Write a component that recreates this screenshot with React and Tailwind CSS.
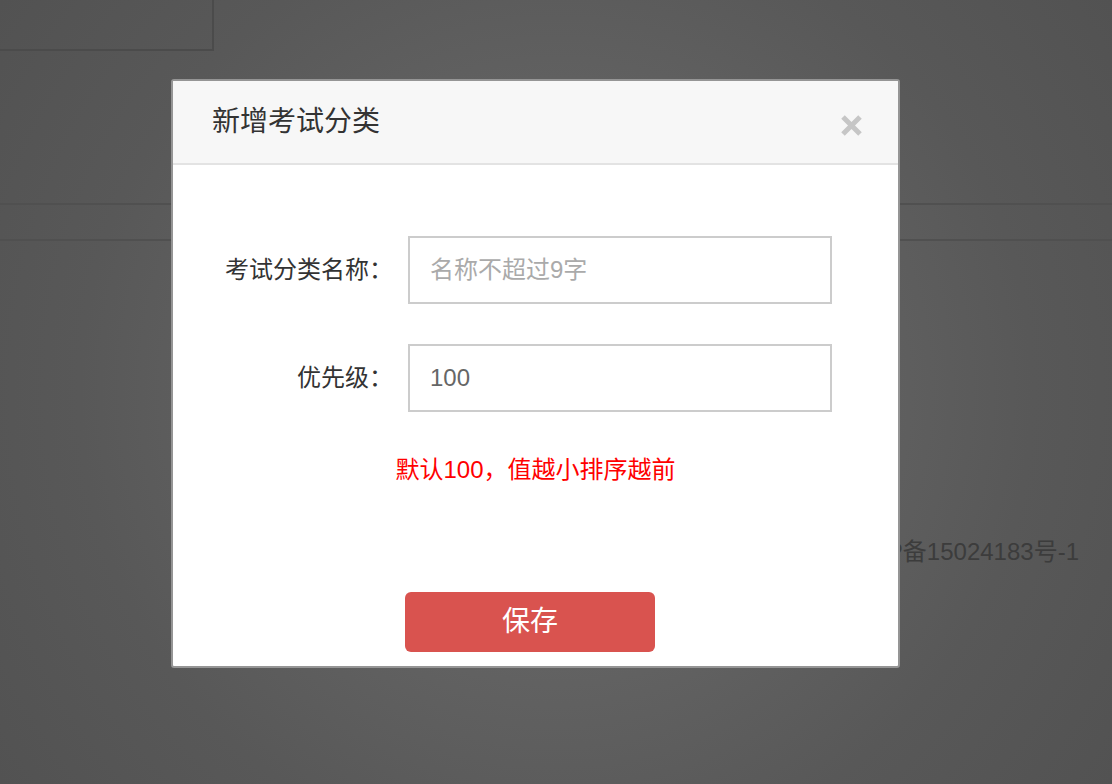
export default function App() {
  const font = { fontFamily: '"Liberation Sans","Noto Sans CJK SC",sans-serif' };
  return (
    <div
      className="relative w-[1112px] h-[784px] overflow-hidden bg-[radial-gradient(circle_at_50%_50%,#676767_0%,#626262_40%,#585858_70%,#525252_100%)]"
      style={font}
    >
      {/* background page (dimmed) */}
      <div className="flex flex-col">
        <div className="w-[214px] h-[51px] border-r-2 border-b-2 border-[#4b4b4b]" />
        <div className="mt-[152px] h-[38px] border-t-2 border-b-2 border-[#505050]" />
        <div className="mt-[296px] flex justify-end pr-[33px] text-[24px] leading-[30px] text-[#3c3c3c]">
          Copyright © 2015-2020 版权所有 沪ICP备15024183号-1
        </div>
      </div>

      {/* modal */}
      <div className="absolute left-[171px] top-[79px] w-[729px] h-[589px] bg-white border-2 border-[#959595] rounded-[3px] flex flex-col overflow-hidden">
        <div className="h-[84px] shrink-0 bg-[#f7f7f7] border-b-2 border-[#e3e3e3] flex items-center justify-between pl-[39px] pr-[35px]">
          <span className="text-[28px] leading-none text-[#333]">新增考试分类</span>
          <svg width="23" height="23" viewBox="0 0 23 23" className="mt-[6px]">
            <path d="M3 3 L20 20 M20 3 L3 20" stroke="#c6c6c6" strokeWidth="5" strokeLinecap="butt" />
          </svg>
        </div>
        <div className="flex flex-col pt-[71px]">
          <div className="flex items-center h-[68px]">
            <label className="w-[220px] text-right text-[24px] text-[#333]">考试分类名称：</label>
            <div className="ml-[15px] w-[424px] h-[68px] border-2 border-[#cccccc] flex items-center pl-[20px] text-[24px] text-[#aaaaaa]">
              名称不超过9字
            </div>
          </div>
          <div className="flex items-center h-[68px] mt-[40px]">
            <label className="w-[220px] text-right text-[24px] text-[#333]">优先级：</label>
            <div className="ml-[15px] w-[424px] h-[68px] border-2 border-[#cccccc] flex items-center pl-[20px] text-[24px] text-[#666666]">
              100
            </div>
          </div>
          <div className="mt-[40px] h-[36px] flex items-center justify-center text-[24px] text-[#ff0000]">
            默认100，值越小排序越前
          </div>
          <div className="mt-[104px] flex">
            <button className="ml-[232px] w-[250px] h-[60px] rounded-[6px] bg-[#d9534f] text-white text-[28px] leading-none flex items-center justify-center">
              保存
            </button>
          </div>
        </div>
      </div>
    </div>
  );
}
